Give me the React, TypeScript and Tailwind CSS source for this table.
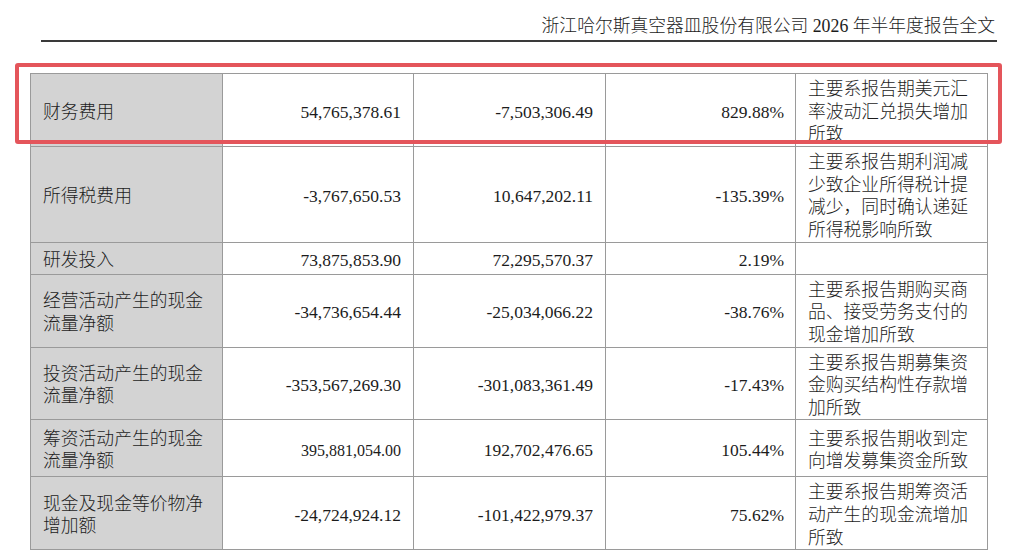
import React from "react";

type Row = {
  label: string[];
  a: string;
  aSmall?: boolean;
  b: string;
  c: string;
  note: string[];
  h: string;
};

const rows: Row[] = [
  {
    label: ["财务费用"],
    a: "54,765,378.61",
    b: "-7,503,306.49",
    c: "829.88%",
    note: ["主要系报告期美元汇", "率波动汇兑损失增加", "所致"],
    h: "h-[70px]",
  },
  {
    label: ["所得税费用"],
    a: "-3,767,650.53",
    b: "10,647,202.11",
    c: "-135.39%",
    note: ["主要系报告期利润减", "少致企业所得税计提", "减少，同时确认递延", "所得税影响所致"],
    h: "h-[96px]",
  },
  {
    label: ["研发投入"],
    a: "73,875,853.90",
    b: "72,295,570.37",
    c: "2.19%",
    note: [],
    h: "h-[32px]",
  },
  {
    label: ["经营活动产生的现金", "流量净额"],
    a: "-34,736,654.44",
    b: "-25,034,066.22",
    c: "-38.76%",
    note: ["主要系报告期购买商", "品、接受劳务支付的", "现金增加所致"],
    h: "h-[70px]",
  },
  {
    label: ["投资活动产生的现金", "流量净额"],
    a: "-353,567,269.30",
    b: "-301,083,361.49",
    c: "-17.43%",
    note: ["主要系报告期募集资", "金购买结构性存款增", "加所致"],
    h: "h-[71px]",
  },
  {
    label: ["筹资活动产生的现金", "流量净额"],
    a: "395,881,054.00",
    aSmall: true,
    b: "192,702,476.65",
    c: "105.44%",
    note: ["主要系报告期收到定", "向增发募集资金所致"],
    h: "h-[57px]",
  },
  {
    label: ["现金及现金等价物净", "增加额"],
    a: "-24,724,924.12",
    b: "-101,422,979.37",
    c: "75.62%",
    note: ["主要系报告期筹资活", "动产生的现金流增加", "所致"],
    h: "h-[70px]",
  },
];

const cell = "border border-[#9a9a9a] align-middle pt-[4px] pb-0";

export default function App() {
  return (
    <div
      className="relative w-[1024px] h-[552px] bg-white text-[#1c1c1c] overflow-hidden font-light"
      style={{ fontFamily: '"Liberation Serif", "Noto Sans CJK SC", serif' }}
    >
      <div className="ml-[41px] w-[956px] pt-[14px] pb-[2px] pr-[2px] text-right text-[17.8px] leading-[24px] border-b-2 border-[#3a3a3a]">
        浙江哈尔斯真空器皿股份有限公司 2026 年半年度报告全文
      </div>

      <table className="ml-[30px] mt-[31px] border-collapse table-fixed w-[957px] text-[17.5px] leading-[22.6px]">
        <colgroup>
          <col className="w-[192px]" />
          <col className="w-[191px]" />
          <col className="w-[192px]" />
          <col className="w-[190px]" />
          <col className="w-[192px]" />
        </colgroup>
        <tbody>
          {rows.map((r, i) => (
            <tr key={i} className={r.h}>
              <td className={`${cell} bg-[#d3d3d3] pl-[12px] pr-0 text-[17.8px]`}>
                {r.label.map((l, j) => (
                  <div key={j} className="whitespace-nowrap">
                    {l}
                  </div>
                ))}
              </td>
              <td className={`${cell} text-right pr-[12px]`}>
                <span className={r.aSmall ? "text-[16px]" : ""}>{r.a}</span>
              </td>
              <td className={`${cell} text-right pr-[12px]`}>{r.b}</td>
              <td className={`${cell} text-right pr-[11px]`}>{r.c}</td>
              <td className={`${cell} pl-[12px] pr-0 text-[17.8px]`}>
                {r.note.map((l, j) => (
                  <div key={j} className="whitespace-nowrap">
                    {l}
                  </div>
                ))}
              </td>
            </tr>
          ))}
        </tbody>
      </table>

      <div className="absolute left-[15px] top-[63px] w-[987px] h-[81px] border-[4px] border-[#e4555b] rounded-[3px] pointer-events-none" />
    </div>
  );
}
